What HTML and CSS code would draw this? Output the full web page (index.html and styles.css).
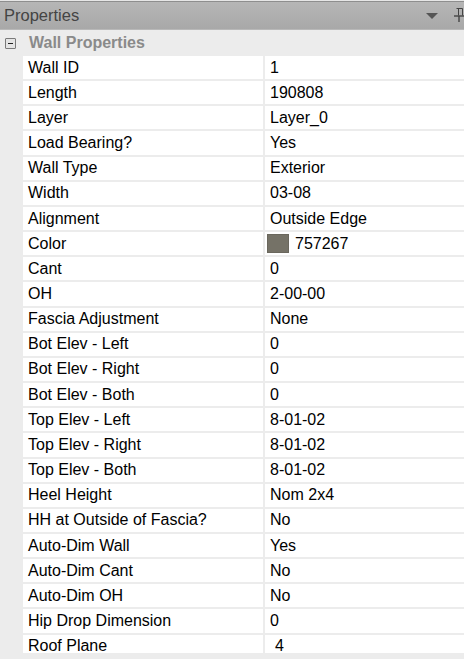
FILE: index.html
```html
<!DOCTYPE html>
<html lang="en">
<head>
  <meta charset="UTF-8">
  <title>Properties</title>
  <link rel="stylesheet" href="styles.css">
</head>
<body>
  <div class="panel">
    <!-- title bar -->
    <div class="titlebar">
      <span class="title">Properties</span>
      <span class="tools">
        <svg class="drop" width="12" height="7" viewBox="0 0 12 7"><polygon points="0,0 12,0 6,6" fill="#555"/></svg>
        <svg class="pin" width="10" height="14" viewBox="0 0 10 14">
          <path d="M2.5 0.5 H8.5 V7.5 M4.5 0.5 V7.5" fill="none" stroke="#444" stroke-width="1"/>
          <path d="M0 8 H10" stroke="#444" stroke-width="1.4"/>
          <path d="M5 8 V14" stroke="#444" stroke-width="1.4"/>
        </svg>
      </span>
    </div>

    <!-- group header -->
    <div class="group">
      <span class="toggle"><span class="minus"></span></span>
      <span class="group-name">Wall Properties</span>
    </div>

    <!-- property rows -->
    <div class="rows">
      <div class="row"><div class="name">Wall ID</div><div class="value">1</div></div>
      <div class="row"><div class="name">Length</div><div class="value">190808</div></div>
      <div class="row"><div class="name">Layer</div><div class="value">Layer_0</div></div>
      <div class="row"><div class="name">Load Bearing?</div><div class="value">Yes</div></div>
      <div class="row"><div class="name">Wall Type</div><div class="value">Exterior</div></div>
      <div class="row"><div class="name">Width</div><div class="value">03-08</div></div>
      <div class="row"><div class="name">Alignment</div><div class="value">Outside Edge</div></div>
      <div class="row"><div class="name">Color</div><div class="value color"><span class="swatch"></span>757267</div></div>
      <div class="row"><div class="name">Cant</div><div class="value">0</div></div>
      <div class="row"><div class="name">OH</div><div class="value">2-00-00</div></div>
      <div class="row"><div class="name">Fascia Adjustment</div><div class="value">None</div></div>
      <div class="row"><div class="name">Bot Elev - Left</div><div class="value">0</div></div>
      <div class="row"><div class="name">Bot Elev - Right</div><div class="value">0</div></div>
      <div class="row"><div class="name">Bot Elev - Both</div><div class="value">0</div></div>
      <div class="row"><div class="name">Top Elev - Left</div><div class="value">8-01-02</div></div>
      <div class="row"><div class="name">Top Elev - Right</div><div class="value">8-01-02</div></div>
      <div class="row"><div class="name">Top Elev - Both</div><div class="value">8-01-02</div></div>
      <div class="row"><div class="name">Heel Height</div><div class="value">Nom 2x4</div></div>
      <div class="row"><div class="name">HH at Outside of Fascia?</div><div class="value">No</div></div>
      <div class="row"><div class="name">Auto-Dim Wall</div><div class="value">Yes</div></div>
      <div class="row"><div class="name">Auto-Dim Cant</div><div class="value">No</div></div>
      <div class="row"><div class="name">Auto-Dim OH</div><div class="value">No</div></div>
      <div class="row"><div class="name">Hip Drop Dimension</div><div class="value">0</div></div>
      <div class="row"><div class="name">Roof Plane</div><div class="value indent">4</div></div>
    </div>
  </div>
</body>
</html>
```

FILE: styles.css
```css
/* page */
body {
  margin: 0;
  font-family: "Liberation Sans", Arial, sans-serif;
  font-size: 16px;
  color: #000;
}
.panel {
  width: 464px;
  height: 659px;
  background-color: #ececec;
  overflow: hidden;
}

/* title bar */
.titlebar {
  height: 28px;
  border-top: 1px solid #e6e6e6;
  border-bottom: 1px solid #b8b8b8;
  box-shadow: inset 0 1px 0 #8e8e8e;
  background: linear-gradient(#b6b6b6, #a8a8a8);
  display: flex;
  align-items: center;
  justify-content: space-between;
  padding-left: 4px;
}
.title {
  color: #444;
  font-size: 16.5px;
}
.tools {
  display: flex;
  align-items: center;
  gap: 16px;
}
.drop {
  margin-top: 2px;
}

/* group header */
.group {
  height: 26px;
  display: flex;
  align-items: center;
}
.toggle {
  width: 9px;
  height: 9px;
  margin-left: 5px;
  border: 1px solid #7a7a7a;
  border-radius: 1px;
  background-color: #e4e4e4;
  display: flex;
  align-items: center;
  justify-content: center;
}
.minus {
  width: 5px;
  height: 1px;
  background-color: #222;
}
.group-name {
  margin-left: 13px;
  font-weight: bold;
  color: #8a8a8a;
}

/* rows (last one is cut by the bottom edge of the grid) */
.rows {
  height: 597px;
  overflow: hidden;
  padding-left: 23px;
  display: flex;
  flex-direction: column;
  gap: 2px;
}
.row {
  display: grid;
  grid-template-columns: 240px 1fr;
  column-gap: 2px;
  flex: none;
  height: 23.17px;
}
.name, .value {
  background-color: #fff;
  display: flex;
  align-items: center;
  white-space: nowrap;
}
.name {
  padding-left: 5px;
}
.value {
  padding-left: 5px;
}
.value.color {
  padding-left: 2px;
}
.swatch {
  width: 20px;
  height: 17px;
  background-color: #757267;
  border: 1px solid #6a675d;
  margin-right: 6px;
}
.value.indent {
  padding-left: 10px;
}
```
